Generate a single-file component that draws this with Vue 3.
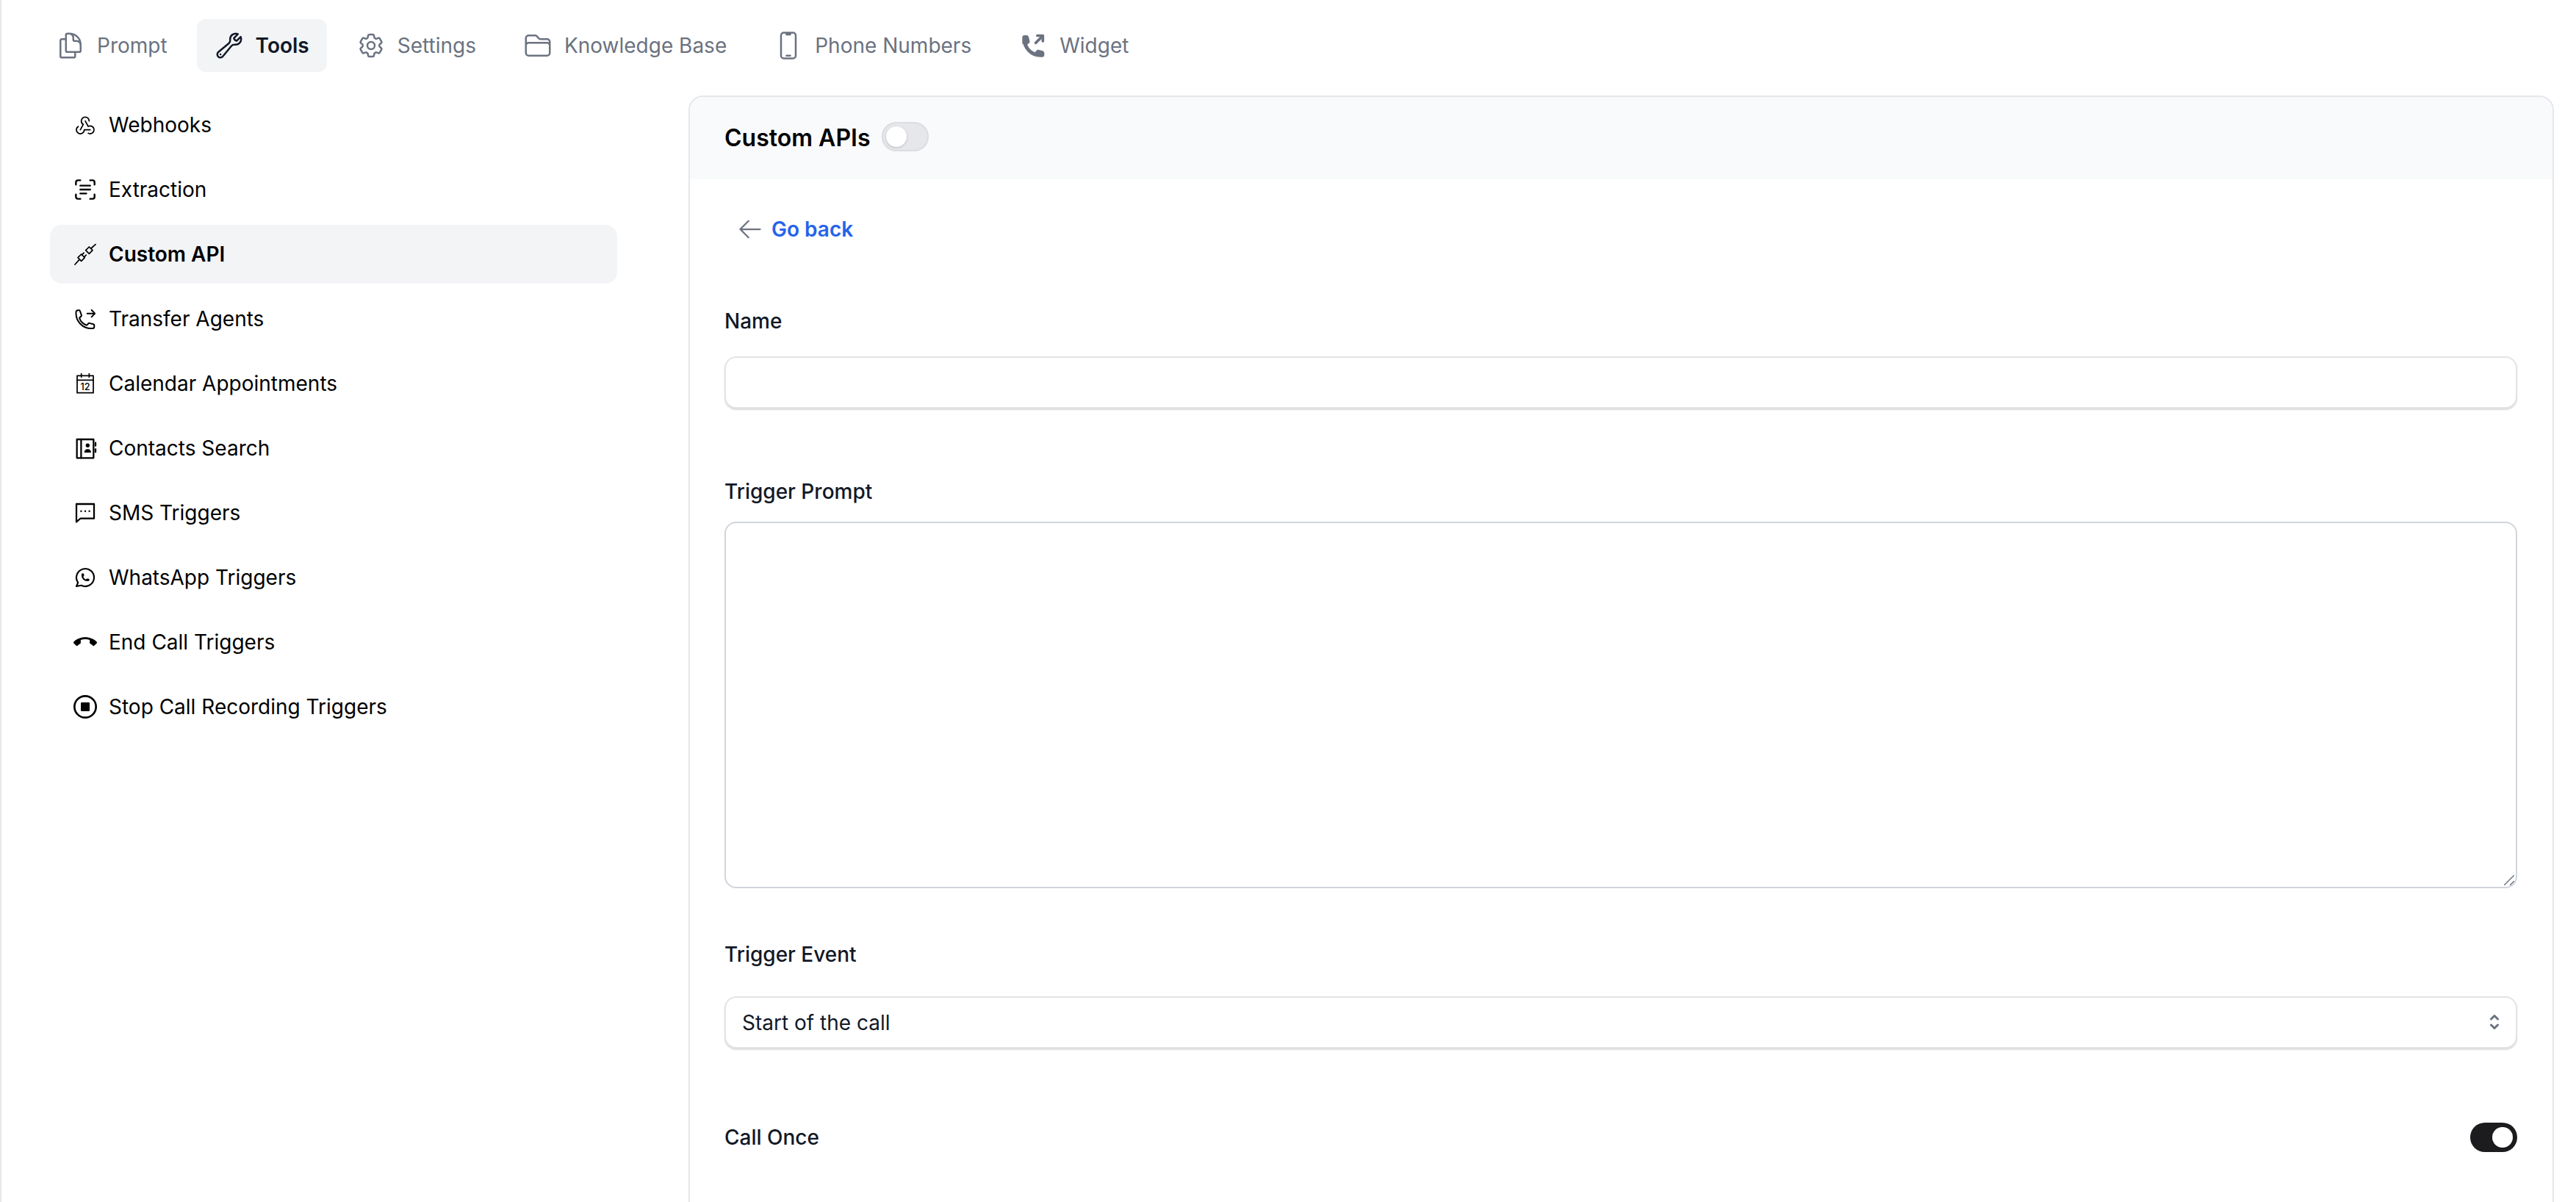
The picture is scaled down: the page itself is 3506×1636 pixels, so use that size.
<script setup>
import { ref } from 'vue'

const tabs = [
  {
    label: 'Prompt',
    paths: ['M15.75 17.25v3.375c0 .621-.504 1.125-1.125 1.125h-9.75a1.125 1.125 0 0 1-1.125-1.125V7.875c0-.621.504-1.125 1.125-1.125H6.75a9.06 9.06 0 0 1 1.5.124m7.5 10.376h3.375c.621 0 1.125-.504 1.125-1.125V11.25c0-4.46-3.243-8.161-7.5-8.876a9.06 9.06 0 0 0-1.5-.124H9.375c-.621 0-1.125.504-1.125 1.125v3.5m7.5 10.375H9.375a1.125 1.125 0 0 1-1.125-1.125v-9.25m12 6.625v-1.875a3.375 3.375 0 0 0-3.375-3.375h-1.5a1.125 1.125 0 0 1-1.125-1.125v-1.5a3.375 3.375 0 0 0-3.375-3.375H9.75'],
  },
  {
    label: 'Tools',
    active: true,
    paths: [
      'M21.75 6.75a4.5 4.5 0 0 1-4.884 4.484c-1.076-.091-2.264.071-2.95.904l-7.152 8.684a2.548 2.548 0 1 1-3.586-3.586l8.684-7.152c.833-.686.995-1.874.904-2.95a4.5 4.5 0 0 1 6.336-4.486l-3.276 3.276a3.004 3.004 0 0 0 2.25 2.25l3.276-3.276c.256.565.398 1.192.398 1.852Z',
      'M4.867 19.125h.008v.008h-.008v-.008Z',
    ],
  },
  {
    label: 'Settings',
    paths: [
      'M9.594 3.94c.09-.542.56-.94 1.11-.94h2.593c.55 0 1.02.398 1.11.94l.213 1.281c.063.374.313.686.645.87.074.04.147.083.22.127.325.196.72.257 1.075.124l1.217-.456a1.125 1.125 0 0 1 1.37.49l1.296 2.247a1.125 1.125 0 0 1-.26 1.431l-1.003.827c-.293.241-.438.613-.43.992a7.723 7.723 0 0 1 0 .255c-.008.378.137.75.43.991l1.004.827c.424.35.534.955.26 1.43l-1.298 2.247a1.125 1.125 0 0 1-1.369.491l-1.217-.456c-.355-.133-.75-.072-1.076.124a6.47 6.47 0 0 1-.22.128c-.331.183-.581.495-.644.869l-.213 1.281c-.09.543-.56.94-1.11.94h-2.594c-.55 0-1.019-.398-1.11-.94l-.213-1.281c-.062-.374-.312-.686-.644-.87a6.52 6.52 0 0 1-.22-.127c-.325-.196-.72-.257-1.076-.124l-1.217.456a1.125 1.125 0 0 1-1.369-.49l-1.297-2.247a1.125 1.125 0 0 1 .26-1.431l1.004-.827c.292-.24.437-.613.43-.991a6.932 6.932 0 0 1 0-.255c.007-.38-.138-.751-.43-.992l-1.004-.827a1.125 1.125 0 0 1-.26-1.43l1.297-2.247a1.125 1.125 0 0 1 1.37-.491l1.216.456c.356.133.751.072 1.076-.124.072-.044.146-.086.22-.128.332-.183.582-.495.644-.869l.214-1.28Z',
      'M15 12a3 3 0 1 1-6 0 3 3 0 0 1 6 0Z',
    ],
  },
  {
    label: 'Knowledge Base',
    paths: ['M2.25 12.75V12A2.25 2.25 0 0 1 4.5 9.75h15A2.25 2.25 0 0 1 21.75 12v.75m-8.69-6.44-2.12-2.12a1.5 1.5 0 0 0-1.061-.44H4.5A2.25 2.25 0 0 0 2.25 6v12a2.25 2.25 0 0 0 2.25 2.25h15A2.25 2.25 0 0 0 21.75 18V9a2.25 2.25 0 0 0-2.25-2.25h-5.379a1.5 1.5 0 0 1-1.06-.44Z'],
  },
  {
    label: 'Phone Numbers',
    paths: ['M10.5 1.5H8.25A2.25 2.25 0 0 0 6 3.75v16.5a2.25 2.25 0 0 0 2.25 2.25h7.5A2.25 2.25 0 0 0 18 20.25V3.75a2.25 2.25 0 0 0-2.25-2.25H13.5m-3 0V3h3V1.5m-3 0h3m-3 18.75h3'],
  },
  {
    label: 'Widget',
    sw: 2.2,
    paths: ['M14.2 9.8l5.6-5.6', 'M15.5 3.9h4.5v4.5'],
    fills: ['M3.6 6.2c0 8 6.4 14.8 14.4 14.8h1.4a1.4 1.4 0 0 0 1.4-1.4v-1.6c0-.6-.4-1-.9-1.2l-3.6-.9c-.5-.1-.9.1-1.2.4l-.8 1c-.3.4-.8.5-1.2.4a10.5 10.5 0 0 1-6-6c-.2-.4 0-.9.4-1.2l1-.8c.4-.3.5-.7.4-1.2l-.9-3.6a1.2 1.2 0 0 0-1.2-.9H5a1.4 1.4 0 0 0-1.4 1.4v4.8Z'],
  },
]

const tools = [
  {
    label: 'Webhooks',
    sw: 1.3,
    paths: [
      'M4.876 13.61a4 4 0 1 0 6.124 3.39h6',
      'M15.066 20.502a4 4 0 1 0 1.934-7.502c-.706 0-1.424.179-2 .5l-3-5.5',
      'M16 8a4 4 0 1 0-8 0c0 1.506.77 2.818 2 3.5l-3 5.5',
    ],
  },
  {
    label: 'Extraction',
    sw: 1.8,
    paths: [
      'M2.5 7V4.5a2 2 0 0 1 2-2H7',
      'M17 2.5h2.5a2 2 0 0 1 2 2V7',
      'M21.5 17v2.5a2 2 0 0 1-2 2H17',
      'M7 21.5H4.5a2 2 0 0 1-2-2V17',
      'M7 8h10',
      'M7 12h10',
      'M7 16h6',
    ],
  },
  {
    label: 'Custom API',
    active: true,
    sw: 1.3,
    paths: [
      'M4.5 15.5 8 12l3.5 3.5L8 19z',
      'M12.5 8 16 4.5 19.5 8 16 11.5z',
      'M1.5 22.5l4.5-5',
      'M18 6l4.5-4',
      'M8.6 12.6l2-2',
      'M10.9 14.9l2-2',
    ],
  },
  {
    label: 'Transfer Agents',
    sw: 1.5,
    paths: [
      'M2.6 6.2c0 8.6 6.9 15.6 15.4 15.6h1.2a2 2 0 0 0 2-2v-1.3c0-.5-.3-.9-.8-1l-4.2-1.1c-.4-.1-.9.1-1.1.4l-.9 1.2c-.3.4-.7.5-1.2.4a11.5 11.5 0 0 1-6.8-6.8c-.2-.4 0-.9.4-1.2l1.2-.9c.3-.3.5-.7.4-1.1L6.7 4a1.1 1.1 0 0 0-1-.8H4.6a2 2 0 0 0-2 2v1Z',
      'M14 6.5h7.5',
      'M18.5 3l3.3 3.5-3.3 3.5',
    ],
  },
  {
    label: 'Calendar Appointments',
    sw: 1.3,
    calendar: true,
    paths: ['M3.75 4h16.5v17.5H3.75z', 'M3.75 8.5h16.5', 'M8 2v3.5', 'M16 2v3.5'],
  },
  {
    label: 'Contacts Search',
    sw: 1.7,
    paths: ['M3.5 3h17v19h-17z', 'M7.8 3v19', 'M22.5 6.5v3', 'M22.5 13v3'],
    fills: ['M14.5 7.2a2 2 0 1 1 0 4 2 2 0 0 1 0-4Z', 'M11 16.5c0-2 1.5-3.5 3.5-3.5s3.5 1.5 3.5 3.5Z'],
  },
  {
    label: 'SMS Triggers',
    sw: 1.7,
    paths: ['M3 3h18v14.8H7L3 21.3z'],
    fills: ['M7 9.5h1.6v1.6H7z', 'M11.2 9.5h1.6v1.6h-1.6z', 'M15.4 9.5h1.6v1.6h-1.6z'],
  },
  {
    label: 'WhatsApp Triggers',
    sw: 1.6,
    paths: [
      'M3 21l1.65-3.8a9 9 0 1 1 3.4 2.9l-5.05.9',
      'M9 10a.5.5 0 0 0 1 0v-1a.5.5 0 0 0-1 0v1a5 5 0 0 0 5 5h1a.5.5 0 0 0 0-1h-1a.5.5 0 0 0 0 1',
    ],
  },
  {
    label: 'End Call Triggers',
    sw: 0,
    fills: ['M12 9c-1.6 0-3.15.25-4.6.72v3.1c0 .4-.23.74-.56.9-.98.49-1.87 1.12-2.67 1.85-.17.18-.42.29-.67.29-.3 0-.55-.12-.73-.3L.29 13.08C.11 12.9 0 12.65 0 12.38c0-.28.11-.53.29-.71C3.34 8.77 7.46 7 12 7s8.66 1.77 11.71 4.67c.18.18.29.43.29.71 0 .27-.11.52-.29.7l-2.48 2.48c-.18.18-.43.3-.73.3-.25 0-.5-.11-.68-.29-.79-.73-1.68-1.36-2.66-1.85-.33-.16-.56-.5-.56-.9v-3.1C15.15 9.25 13.6 9 12 9Z'],
  },
  {
    label: 'Stop Call Recording Triggers',
    sw: 2,
    paths: ['M23 12a11 11 0 1 1-22 0 11 11 0 0 1 22 0Z'],
    fills: ['M8.5 7.5h7a1 1 0 0 1 1 1v7a1 1 0 0 1-1 1h-7a1 1 0 0 1-1-1v-7a1 1 0 0 1 1-1Z'],
  },
]

const name = ref('')
const triggerPrompt = ref('')
const triggerEvent = ref('start')
</script>

<template>
  <div class="page">
    <nav class="tabs">
      <div v-for="tab in tabs" :key="tab.label" class="tab" :class="{ active: tab.active }">
        <svg class="tab-icon" viewBox="0 0 24 24" fill="none" stroke="currentColor" :stroke-width="tab.sw || 1.5" stroke-linecap="round" stroke-linejoin="round">
          <path v-for="d in tab.fills" :key="d" :d="d" fill="currentColor" stroke-width="0.8" />
          <path v-for="d in tab.paths" :key="d" :d="d" />
        </svg>
        <span>{{ tab.label }}</span>
      </div>
    </nav>

    <div class="main">
      <aside class="sidebar">
        <div v-for="tool in tools" :key="tool.label" class="tool" :class="{ active: tool.active }">
          <svg class="tool-icon" viewBox="0 0 24 24" fill="none" stroke="currentColor" :stroke-width="tool.sw" stroke-linecap="round" stroke-linejoin="round">
            <path v-for="d in tool.fills" :key="d" :d="d" fill="currentColor" stroke="none" />
            <path v-for="d in tool.paths" :key="d" :d="d" />
            <text v-if="tool.calendar" x="12" y="18.6" class="cal-day">12</text>
          </svg>
          <span>{{ tool.label }}</span>
        </div>
      </aside>

      <section class="card">
        <header class="card-head">
          <h2>Custom APIs</h2>
          <span class="switch"><span class="knob"></span></span>
        </header>

        <div class="card-body">
          <a class="back">
            <svg class="back-icon" viewBox="0 0 24 24" fill="none" stroke="currentColor" stroke-width="1.5" stroke-linecap="round" stroke-linejoin="round">
              <path d="M10.5 19.5 3 12m0 0 7.5-7.5M3 12h18" />
            </svg>
            <span>Go back</span>
          </a>

          <label class="label name-label">Name</label>
          <input v-model="name" class="field" type="text" />

          <label class="label prompt-label">Trigger Prompt</label>
          <div class="area-wrap">
            <textarea v-model="triggerPrompt" class="field area"></textarea>
            <svg class="grip" viewBox="0 0 14 14" fill="none" stroke="currentColor" stroke-width="1.4" stroke-linecap="round">
              <path d="M0.5 13.5 13.5 0.5" />
              <path d="M8.5 13.5 13.5 8.5" />
            </svg>
          </div>

          <label class="label event-label">Trigger Event</label>
          <div class="select-wrap">
            <select v-model="triggerEvent" class="field select">
              <option value="start">Start of the call</option>
              <option value="end">End of the call</option>
            </select>
            <svg class="chevrons" viewBox="0 0 12 22" fill="none" stroke="currentColor" stroke-width="3" stroke-linecap="round" stroke-linejoin="round">
              <path d="M1.5 7 6 2.5 10.5 7" />
              <path d="M1.5 15 6 19.5 10.5 15" />
            </svg>
          </div>

          <div class="once-row">
            <span class="label">Call Once</span>
            <span class="switch on"><span class="knob"></span></span>
          </div>
        </div>
      </section>
    </div>
  </div>
</template>

<style>
html,
body {
  margin: 0;
  height: 100%;
  overflow: hidden;
  background: #fff;
}
</style>

<style scoped>
.page {
  box-sizing: border-box;
  height: 100vh;
  overflow: hidden;
  padding-top: 26px;
  border-left: 2px solid #e5e7eb;
  font-family: Inter, 'Liberation Sans', sans-serif;
  font-size: 28px;
  line-height: 40px;
  color: #111827;
}

.tabs {
  display: flex;
  gap: 16px;
  padding-left: 50px;
}

.tab {
  display: flex;
  align-items: center;
  gap: 16px;
  padding: 16px 24px;
  border-radius: 12px;
  font-weight: 400;
  color: #6b7280;
}

.tab.active {
  background: #f3f4f6;
  color: #111827;
  font-weight: 600;
}

.tab-icon {
  width: 40px;
  height: 40px;
  flex: none;
}

.main {
  display: flex;
  margin-top: 32px;
  padding-right: 30px;
}

.sidebar {
  flex: none;
  display: flex;
  flex-direction: column;
  gap: 8px;
  width: 772px;
  margin-left: 66px;
  margin-right: 97px;
}

.tool {
  display: flex;
  align-items: center;
  gap: 16px;
  height: 80px;
  padding: 0 32px;
  border-radius: 16px;
  font-weight: 400;
  color: #000;
}

.tool.active {
  background: #f3f4f6;
  font-weight: 600;
}

.tool-icon {
  width: 32px;
  height: 32px;
  flex: none;
}

.cal-day {
  font-family: Inter, 'Liberation Sans', sans-serif;
  font-size: 9.5px;
  font-weight: 500;
  text-anchor: middle;
  fill: currentColor;
  stroke: none;
}

.card {
  flex: 1;
  min-width: 0;
  height: 1700px;
  border: 2px solid #e5e7eb;
  border-radius: 20px;
  overflow: hidden;
}

.card-head {
  display: flex;
  align-items: center;
  gap: 16px;
  height: 112px;
  padding: 0 47px;
  background: #f9fafb;
}

.card-head h2 {
  margin: 0;
  font-size: 32px;
  line-height: 56px;
  font-weight: 600;
  color: #000;
}

.card-head .switch {
  margin-bottom: 5px;
}

.switch {
  display: flex;
  align-items: center;
  box-sizing: border-box;
  width: 64px;
  height: 40px;
  padding: 0 6px;
  border-radius: 20px;
  background: #e5e7eb;
  box-shadow: inset 0 0 0 2px #dcdde0;
}

.switch.on {
  justify-content: flex-end;
  background: #1c1c1e;
  box-shadow: none;
}

.knob {
  width: 28px;
  height: 28px;
  border-radius: 50%;
  background: #fff;
  box-shadow: 0 1px 3px rgba(0, 0, 0, 0.2);
}

.card-body {
  display: flex;
  flex-direction: column;
  padding: 0 48px 0 47px;
}

.back {
  display: flex;
  align-items: center;
  gap: 11px;
  margin-top: 48px;
  padding-left: 17px;
  font-weight: 600;
  color: #2563eb;
}

.back-icon {
  width: 36px;
  height: 36px;
  flex: none;
  color: #6b7280;
}

.label {
  font-weight: 500;
  color: #111827;
}

.name-label {
  margin-top: 85px;
  margin-bottom: 28px;
}

.prompt-label {
  margin-top: 93px;
  margin-bottom: 21px;
}

.event-label {
  margin-top: 70px;
  margin-bottom: 37px;
}

.field {
  box-sizing: border-box;
  display: block;
  width: 100%;
  height: 71px;
  margin: 0;
  padding: 0 22px;
  border: 2px solid #e3e4e7;
  border-radius: 16px;
  outline: none;
  background: #fff;
  box-shadow: 0 2px 2px rgba(0, 0, 0, 0.14);
  font: inherit;
  color: #111827;
}

.area-wrap {
  position: relative;
}

.area {
  height: 499px;
  padding: 16px 22px;
  border-color: #d1d5db;
  box-shadow: none;
  resize: none;
}

.grip {
  position: absolute;
  right: 4px;
  bottom: 4px;
  width: 14px;
  height: 14px;
  color: #6b7280;
  pointer-events: none;
}

.select-wrap {
  position: relative;
}

.select {
  appearance: none;
  -webkit-appearance: none;
  padding-right: 60px;
}

.chevrons {
  position: absolute;
  top: 24px;
  right: 25px;
  width: 12px;
  height: 22px;
  color: #6b7280;
  pointer-events: none;
}

.once-row {
  display: flex;
  align-items: center;
  justify-content: space-between;
  margin-top: 101px;
}
</style>
